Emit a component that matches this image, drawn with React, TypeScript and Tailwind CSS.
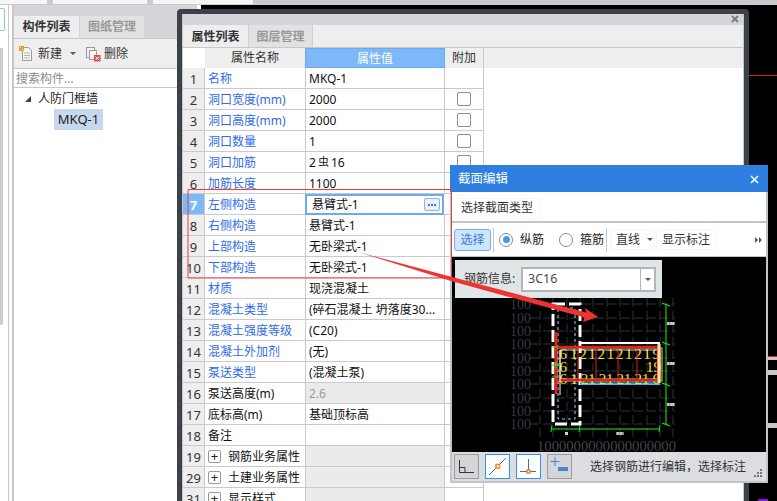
import React from 'react';

const FONT = '[font-family:"Noto_Sans","Noto_Sans_CJK_SC",sans-serif]';

type Row = {
  no: number;
  name: string;
  value?: React.ReactNode;
  check?: boolean;
  black?: boolean;
  grayValue?: boolean;
  group?: boolean;
};

const rows: Row[] = [
  { no: 1, name: '名称', value: 'MKQ-1' },
  { no: 2, name: '洞口宽度(mm)', value: '2000', check: true },
  { no: 3, name: '洞口高度(mm)', value: '2000', check: true },
  { no: 4, name: '洞口数量', value: '1', check: true },
  { no: 5, name: '洞口加筋', value: <span>2<span className="text-[11px] mx-[2px] relative -top-[1px]">虫</span>16</span>, check: true },
  { no: 6, name: '加筋长度', value: '1100' },
  { no: 7, name: '左侧构造', value: '悬臂式-1' },
  { no: 8, name: '右侧构造', value: '悬臂式-1' },
  { no: 9, name: '上部构造', value: '无卧梁式-1' },
  { no: 10, name: '下部构造', value: '无卧梁式-1' },
  { no: 11, name: '材质', value: '现浇混凝土' },
  { no: 12, name: '混凝土类型', value: '(碎石混凝土 坍落度30...' },
  { no: 13, name: '混凝土强度等级', value: '(C20)' },
  { no: 14, name: '混凝土外加剂', value: '(无)' },
  { no: 15, name: '泵送类型', value: '(混凝土泵)' },
  { no: 16, name: '泵送高度(m)', value: <span className="text-[#9a9a9a]">2.6</span>, black: true, grayValue: true },
  { no: 17, name: '底标高(m)', value: '基础顶标高', black: true },
  { no: 18, name: '备注', black: true },
  { no: 19, name: '钢筋业务属性', black: true, grayValue: true, group: true },
  { no: 29, name: '土建业务属性', black: true, grayValue: true, group: true },
  { no: 31, name: '显示样式', black: true, grayValue: true, group: true },
];

const PropertyRow = ({ row }: { row: Row }) => {
  const active = row.no === 7;
  return (
    <div className="flex h-[21px] leading-[22px]">
      <div className={`w-[22px] shrink-0 text-center border-r border-b border-[#c9c9d0] text-[13px] ${active ? 'bg-[#7db8f8] text-white font-bold' : 'bg-[#eeeeee] text-[#333333]'}`}>
        {row.no}
      </div>
      <div className={`w-[101px] shrink-0 flex items-center pl-[3px] pt-[1px] border-r border-b border-[#c9c9d0] whitespace-nowrap ${row.black ? 'text-[#111111]' : 'text-[#2f6be6]'}`}>
        {row.group && (
          <span className="w-[13px] h-[13px] mr-[7px] border border-[#999999] rounded-[2px] flex items-center justify-center text-[13px] leading-none text-[#222222]">+</span>
        )}
        {row.name}
      </div>
      {active ? (
        <div className="w-[139px] shrink-0 flex items-center justify-between pl-[5px] pr-[2px] border-2 border-[#6aabef] border-l-[2px] text-[#111111] -ml-[1px]">
          <span>{row.value}</span>
          <span className="w-[16px] h-[13px] bg-[#e9f2fc] border border-[#8fb4da] rounded-[2px] flex items-center justify-center gap-[1px]">
            <i className="w-[2px] h-[2px] bg-[#4a7fb5]" />
            <i className="w-[2px] h-[2px] bg-[#4a7fb5]" />
            <i className="w-[2px] h-[2px] bg-[#4a7fb5]" />
          </span>
        </div>
      ) : (
        <div className={`w-[139px] shrink-0 pl-[3px] border-r border-b border-[#c9c9d0] whitespace-nowrap overflow-hidden text-[#111111] ${row.grayValue ? 'bg-[#ebebeb]' : 'bg-white'}`}>
          {row.value}
        </div>
      )}
      <div className="w-[39px] shrink-0 flex items-center justify-center border-r border-b border-[#c9c9d0]">
        {row.check && <span className="w-[14px] h-[14px] border border-[#8c8c8c] rounded-[2px] bg-white" />}
      </div>
    </div>
  );
};

const NewIcon = () => (
  <svg width="16" height="16" viewBox="0 0 16 16">
    <path d="M4.5 1.5h6l3 3v10h-9z" fill="#f7f7f7" stroke="#9a9a9a" />
    <path d="M6 7h6M6 9.5h6M6 12h6" stroke="#b5b5b5" />
    <rect x="1" y="0" width="5" height="5" fill="#f39a2b" />
    <path d="M2 1h1v1H2zM4 3h1v1H4z" fill="#fff" />
  </svg>
);

const DeleteIcon = () => (
  <svg width="16" height="16" viewBox="0 0 16 16">
    <rect x="1.5" y="1.5" width="8" height="10" fill="#f4f4f4" stroke="#9a9a9a" />
    <rect x="4.5" y="4.5" width="7" height="9" fill="#f4f4f4" stroke="#9a9a9a" />
    <rect x="9" y="9" width="6.5" height="6.5" fill="#dd4a4a" />
    <path d="M10.5 10.5l3.5 3.5M14 10.5L10.5 14" stroke="#fff" />
  </svg>
);

const LeftPanel = () => (
  <div className="w-[164px] shrink-0 h-full bg-white border-l border-[#c8c8c8] flex flex-col">
    <div className="h-[11px] bg-[#d4d5d9]" />
    <div className="h-[22px] flex bg-[#d4d5d9] font-bold">
      <div className="w-[65px] bg-[#eeeeee] flex items-center justify-center text-[#333333]">构件列表</div>
      <div className="w-[64px] ml-[1px] bg-[#e2e2e2] flex items-center justify-center text-[#999999]">图纸管理</div>
    </div>
    <div className="h-[31px] bg-[#eeeeee] border-t border-b border-[#c8c8c8] flex items-center pl-[4px] text-[#333333]">
      <NewIcon />
      <span className="ml-[4px]">新建</span>
      <span className="ml-[8px] border-x-[3px] border-x-transparent border-t-[3px] border-t-[#555555]" />
      <span className="ml-[9px]"><DeleteIcon /></span>
      <span className="ml-[3px]">删除</span>
    </div>
    <div className="h-[19px] border-b border-[#c8c8c8] pl-[2px] leading-[20px] text-[#8c8c8c]">搜索构件...</div>
    <div className="flex items-center h-[22px] mt-[-1px] pt-[2px] pl-[11px] text-[#222222]">
      <span className="border-b-[6px] border-l-[6px] border-b-[#444444] border-l-transparent" />
      <span className="ml-[7px]">人防门框墙</span>
    </div>
    <div className="ml-[40px] w-[49px] h-[21px] bg-[#c5d8f0] flex items-center justify-center text-[#222222] text-[13px]">MKQ-1</div>
  </div>
);

const PropertyWindow = () => (
  <div className="absolute left-[177px] top-[9px] w-[572px] h-[510px] bg-[#3c4247] rounded-t-[4px] px-[5px] pt-[5px]">
    <div className="h-full bg-white border-x border-[#c4c8cc] flex flex-col">
      <div className="h-[11px] bg-[#d4d5d9] relative">
        <svg className="absolute right-[4px] top-[1px]" width="8" height="8" viewBox="0 0 8 8">
          <path d="M1 1l6 6M7 1L1 7" stroke="#7a7a7a" strokeWidth="1.8" />
        </svg>
      </div>
      <div className="h-[23px] flex bg-[#eeeeee] border-b border-[#c8c8c8] font-bold">
        <div className="w-[65px] pt-[1px] flex items-center justify-center text-[#333333]">属性列表</div>
        <div className="w-[65px] pt-[1px] bg-[#e2e2e2] border-x border-[#d0d0d0] flex items-center justify-center text-[#999999]">图层管理</div>
      </div>
      <div className="h-[20px] flex bg-[#eeeeee] leading-[20px]">
        <div className="w-[22px] bg-white" />
        <div className="w-[100px] text-center text-[#333333]">属性名称</div>
        <div className="w-[140px] text-center text-white bg-[#7db8f8] border border-[#6aabef]">属性值</div>
        <div className="w-[39px] text-center text-[#333333] border-r border-[#c9c9d0]">附加</div>
      </div>
      {rows.map(row => <PropertyRow key={row.no} row={row} />)}
    </div>
  </div>
);

const SmallBtn = ({ active, children }: { active?: boolean; children: React.ReactNode }) => (
  <div className={`w-[25px] h-[25px] flex items-center justify-center border-[1.5px] ${active ? 'bg-white border-[#2a96f0]' : 'bg-[#d4d5d8] border-[#9c9c9c]'}`}>
    {children}
  </div>
);

const Radio = ({ on }: { on?: boolean }) => (
  <span className="w-[14px] h-[14px] rounded-full border border-[#8a8a8a] flex items-center justify-center bg-white">
    {on && <span className="w-[7px] h-[7px] rounded-full bg-[#3f9bf4]" />}
  </span>
);

// CAD preview, coordinates are taken from the screen so the viewBox starts at the canvas corner
const CadDrawing = () => {
  const hs = [303, 317, 330, 343, 357, 370, 383, 397, 410, 423];
  const vs = [540, 553, 567, 580, 593, 607, 620, 633, 647, 660, 673];
  return (
    <svg className="w-full h-full block" viewBox="452 256 314 195">
      {hs.map(y => <line key={y} x1="530" x2="675" y1={y} y2={y} stroke="#2f343b" strokeDasharray="9 4" />)}
      {vs.map(x => <line key={x} x1={x} x2={x} y1="297" y2="438" stroke="#2f343b" strokeDasharray="9 4" />)}
      {hs.map(y => (
        <text key={y} x="510" y={y + 5} fontSize="14" fill="#363b42" fontFamily="Liberation Serif, serif">100</text>
      ))}
      <text x="537" y="450" fontSize="15" fill="#3f454d" fontFamily="Liberation Serif, serif" textLength="139" lengthAdjust="spacingAndGlyphs">1000000000000000000</text>

      <rect x="553" y="303" width="27" height="120" fill="none" stroke="#ffffff" strokeWidth="3" strokeDasharray="12 4" />
      <rect x="558" y="307" width="17" height="111" fill="none" stroke="#a8d4f2" strokeDasharray="3 3" />
      <path d="M580 342H660M580 383H660" stroke="#ffffff" strokeWidth="2" />
      <path d="M580 382.5H660" stroke="#18a0e4" strokeWidth="2.5" />
      <g fontFamily="Liberation Serif, serif" fontSize="15" fill="#f6e02e">
        <text x="570" y="358" textLength="90">1212121219</text>
        <text x="570" y="383" textLength="90">1 21 21 21 21 6</text>
        <text x="552" y="358">16</text>
        <text x="552" y="371">16</text>
        <text x="552" y="383">16</text>
        <text x="646" y="371">19</text>
      </g>
      <rect x="557" y="347" width="105" height="33" fill="none" stroke="#f2dc2e" />
      <rect x="560" y="349" width="100" height="29" fill="none" stroke="#ffffff" strokeWidth="0.8" />
      <path d="M556 331V393" stroke="#e01f1f" strokeWidth="3" />
      <path d="M556 346H658V379H556" fill="none" stroke="#e01f1f" strokeWidth="2.5" />
      <path d="M578 346V379M596 346V379M618 346V379M637 346V379" stroke="#e01f1f" />
      <path d="M560 349V394" stroke="#ffffff" />
      <path d="M659 343V382" stroke="#f4e4a0" strokeWidth="3" />

      <g stroke="#18f018" fill="none">
        <path d="M666 303V424M552 428H660" />
        <path d="M662 302l8 3M662 341l8 3M662 382l8 3M662 422l8 3M552 424l-1 7M580 424l-1 7M660 424l-1 7" />
        <path d="M552 364h8M556 360v8M552 346h6M552 376h6" />
      </g>
      {[322, 362, 403].map(y => (
        <g key={y}>
          <rect x="667" y={y - 1} width="8" height="3" fill="#8a8a8a" />
          <path d={`M668 ${y - 1}v3M671 ${y - 1}v3M673 ${y - 1}v3`} stroke="#ffffff" />
        </g>
      ))}
      <rect x="565" y="431" width="3" height="3" fill="#cfcfcf" />
      <rect x="616" y="431" width="8" height="3" fill="#8a8a8a" />
      <path d="M618 431v3M621 431v3" stroke="#ffffff" />
    </svg>
  );
};

const SectionDialog = () => (
  <div className="absolute left-[450px] top-[165px] w-[318px] h-[318px] bg-[#c0c4cb] flex flex-col">
    <div className="h-[27px] shrink-0 bg-[#2e7fe0] flex items-center justify-between pl-[8px] pr-[9px] pt-[1px] text-white text-[12.5px]">
      <span>截面编辑</span>
      <svg width="9" height="9" viewBox="0 0 9 9">
        <path d="M1 1l7 7M8 1L1 8" stroke="#fff" strokeWidth="1.6" />
      </svg>
    </div>
    <div className="flex-1 flex flex-col mx-[2px] mb-[2px] min-h-0">
      <div className="h-[29px] shrink-0 bg-white flex items-center pl-[2px] pt-[3px]">
        <div className="h-[21px] px-[6px] flex items-center border border-[#f6f6f6] rounded-[3px] text-[#333333]">选择截面类型</div>
      </div>
      <div className="h-[33px] shrink-0 mt-[2px] bg-white flex items-center pl-[2px] pr-[4px] text-[#222222]">
        <div className="w-[37px] h-[22px] bg-[#cfe5fb] border border-[#6ab0f5] rounded-[3px] flex items-center justify-center text-[#2f7fe0]">选择</div>
        <div className="w-px h-[24px] ml-[2px] bg-[#c8c8c8]" />
        <div className="ml-[5px] flex items-center"><Radio on /><span className="ml-[7px]">纵筋</span></div>
        <div className="ml-[15px] flex items-center"><Radio /><span className="ml-[7px]">箍筋</span></div>
        <div className="w-px h-[24px] ml-[2px] bg-[#c8c8c8]" />
        <div className="ml-[3px] w-[45px] h-[21px] border border-[#f6f6f6] rounded-[3px] flex items-center pl-[5px] text-[#333333]">
          直线
          <span className="ml-[7px] border-x-[3px] border-x-transparent border-t-[3px] border-t-[#555555]" />
        </div>
        <div className="ml-[1px] h-[21px] px-[5px] border border-[#f6f6f6] rounded-[3px] flex items-center text-[#333333]">显示标注</div>
        <div className="ml-auto flex">
          <span className="border-y-[3px] border-y-transparent border-l-[3px] border-l-[#555555]" />
          <span className="ml-[1px] border-y-[3px] border-y-transparent border-l-[3px] border-l-[#555555]" />
        </div>
      </div>
      <div className="h-[195px] shrink-0 mt-[1px] bg-black relative overflow-hidden">
        <CadDrawing />
        <div className="absolute left-[3px] top-[3px] w-[207px] h-[38px] bg-[#e0e5e7] flex items-center pl-[9px] text-[#333333]">
          <span className="w-[57px]">钢筋信息:</span>
          <div className="w-[135px] h-[25px] bg-white border-2 border-[#b5b5b5] flex items-center">
            <span className="flex-1 pl-[5px] text-[#4a4a4a] text-[12.5px]">3C16</span>
            <span className="w-[14px] h-full border-l border-[#b5b5b5] flex items-center justify-center">
              <span className="border-x-[3px] border-x-transparent border-t-[3px] border-t-[#555555]" />
            </span>
          </div>
        </div>
      </div>
      <div className="flex-1 bg-[#dcdde0] flex items-center pl-[2px] gap-[6px] relative">
        <SmallBtn>
          <svg width="19" height="19" viewBox="0 0 19 19" fill="none" stroke="#333">
            <path d="M2.5 3v12.5H17" />
            <path d="M2.5 10.5H8v5" />
          </svg>
        </SmallBtn>
        <SmallBtn active>
          <svg width="21" height="21" viewBox="0 0 21 21" fill="none">
            <path d="M2 19L19 2" stroke="#3a6fc0" />
            <rect x="9" y="8.5" width="3.5" height="3.5" fill="#fff" stroke="#f08a1e" strokeWidth="1.5" />
          </svg>
        </SmallBtn>
        <SmallBtn active>
          <svg width="21" height="21" viewBox="0 0 21 21" fill="none">
            <path d="M2 15.5h16" stroke="#3a6fc0" />
            <path d="M10.5 3v11" stroke="#3a6fc0" />
            <rect x="9" y="14" width="3" height="3" fill="#fff" stroke="#f08a1e" strokeWidth="1.5" />
          </svg>
        </SmallBtn>
        <SmallBtn>
          <svg width="21" height="21" viewBox="0 0 21 21" fill="none">
            <path d="M6 1v9M1.5 5.5h9" stroke="#4a86c8" />
            <rect x="9" y="11" width="10" height="4" fill="#4a86c8" />
          </svg>
        </SmallBtn>
        <span className="ml-[12px] text-[#333333] whitespace-nowrap">选择钢筋进行编辑，选择标注</span>
        <svg className="absolute right-[4px] bottom-[4px]" width="8" height="8" viewBox="0 0 8 8" fill="#777">
          <rect x="6" y="0" width="2" height="2" />
          <rect x="3" y="3" width="2" height="2" />
          <rect x="6" y="3" width="2" height="2" />
          <rect x="0" y="6" width="2" height="2" />
          <rect x="3" y="6" width="2" height="2" />
          <rect x="6" y="6" width="2" height="2" />
        </svg>
      </div>
    </div>
  </div>
);

export default function App() {
  return (
    <div className={`relative w-[777px] h-[501px] overflow-hidden bg-black text-[12px] ${FONT}`}>
      {/* top edge of the host window */}
      <div className="h-[5px] bg-[#c8cad0] flex gap-[6px]">
        <div className="w-[47px] h-[4px] bg-[#f5f5f5]" />
        <div className="w-[94px] h-[4px] bg-[#f5f5f5]" />
        <div className="w-[100px] h-[4px] bg-[#f5f5f5]" />
      </div>
      <div className="flex h-[496px]">
        <div className="w-[13px] shrink-0 h-full bg-white border-r border-[#c8c8c8] relative">
          <div className="absolute left-0 top-[3px] w-[5px] h-[23px] border border-l-0 border-[#8cc0f0] rounded-r-[2px]" />
          <div className="absolute left-0 top-[43px] w-[3px] h-[277px] bg-[#cccccc] rounded-br-[2px]" />
          <div className="absolute left-[8px] top-0 w-px h-full bg-[#c8c8c8]" />
        </div>
        <LeftPanel />
        <div className="flex h-[9px]">
          <div className="w-[20px] bg-[#d4d5d9]" />
          <div className="w-[4px] bg-white" />
        </div>
      </div>

      {/* CAD view peeking out at the right of the windows */}
      <svg className="absolute left-[749px] top-0" width="28" height="501" viewBox="0 0 28 501">
        <path d="M0 75.5H28" stroke="#d81e1e" />
        <path d="M19 356.5H28" stroke="#e02020" />
        <rect x="19" y="357" width="9" height="3" fill="#c8c8c8" />
        <rect x="19" y="370" width="9" height="5" fill="#c8c8c8" />
        <rect x="19" y="423" width="9" height="5" fill="#c8c8c8" />
        <rect x="9" y="499" width="10" height="2" fill="#8a10e0" />
      </svg>

      <PropertyWindow />
      <SectionDialog />

      {/* red markup drawn on top of everything */}
      <svg className="absolute inset-0 pointer-events-none" width="777" height="501" viewBox="0 0 777 501">
        <path d="M452 278H188V189.5H451.5V278" fill="none" stroke="#f03a3a" strokeWidth="1" />
        <path d="M358 252L452 277L586 312.5L585 308L598 317L583 322L584.5 317.5L451 281Z" fill="#ee3333" />
      </svg>
    </div>
  );
}
